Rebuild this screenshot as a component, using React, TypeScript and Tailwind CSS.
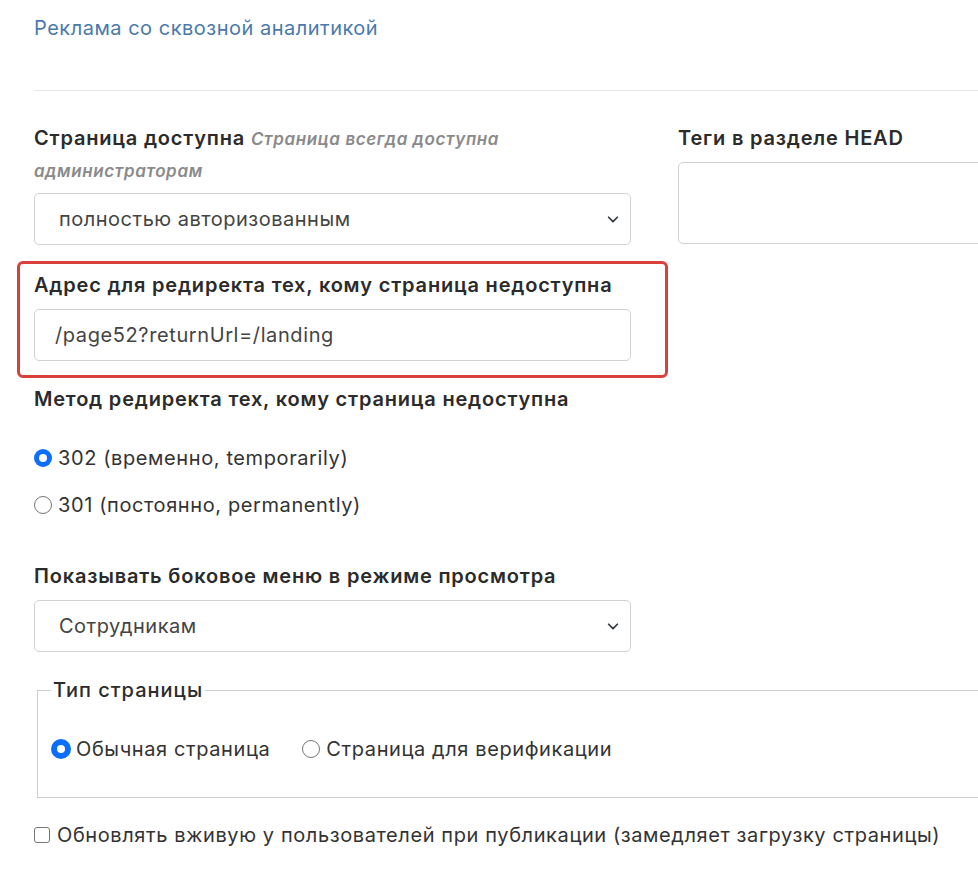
import React from "react";

function Chevron() {
  return (
    <svg width="14" height="14" viewBox="0 0 16 16" fill="none" stroke="#343a40" strokeWidth="2" strokeLinecap="round" strokeLinejoin="round">
      <path d="M3 6l5 5 5-5" />
    </svg>
  );
}

function SelectBox({ value }: { value: string }) {
  return (
    <div className="flex h-[52px] items-center justify-between rounded-[5px] border border-[#d2d2d2] bg-white pl-[24px] pr-[10px] text-[20px] tracking-[0.5px] text-[#444]">
      <span>{value}</span>
      <Chevron />
    </div>
  );
}

function Radio({ checked, big }: { checked?: boolean; big?: boolean }) {
  const size = big ? "h-[20px] w-[20px]" : "h-[18px] w-[18px]";
  if (checked) {
    return (
      <span className={`${size} flex shrink-0 items-center justify-center rounded-full bg-[#0d6efd]`}>
        <span className="h-[8px] w-[8px] rounded-full bg-white" />
      </span>
    );
  }
  return <span className={`${size} shrink-0 rounded-full border border-[#767676] bg-white`} />;
}

const label = "text-[20px] font-semibold leading-[31px] tracking-[0.8px] text-[#2b2b2b]";

export default function App() {
  return (
    <div className="w-[978px] h-[875px] overflow-hidden bg-white font-['Inter',sans-serif]">
      <div className="w-[1300px] pl-[34px] pt-[14px]">
        <a className="block text-[20px] leading-[28px] tracking-[0.5px] text-[#4a7aab]">Реклама со сквозной аналитикой</a>
        <div className="mt-[48px] h-px bg-[#e6e6e6]" />

        <div className="mt-[32px] flex gap-[47px]">
          <div className="w-[597px] shrink-0">
            <div className={label}>
              Страница доступна{" "}
              <em className="text-[17px] font-semibold leading-[31px] tracking-[0.6px] text-[#8a8a8a]">Страница всегда доступна администраторам</em>
            </div>
            <div className="mt-[6px]">
              <SelectBox value="полностью авторизованным" />
            </div>

            <div className="-ml-[17px] -mr-[37px] mt-[16px] rounded-[6px] border-[3px] border-[#d9403a] pb-[14px] pl-[14px] pr-[34px] pt-[6px]">
              <div className={label}>Адрес для редиректа тех, кому страница недоступна</div>
              <div className="mt-[8px] flex h-[52px] items-center rounded-[5px] border border-[#d2d2d2] pl-[20px] text-[20px] tracking-[0.6px] text-[#444]">
                /page52?returnUrl=/landing
              </div>
            </div>

            <div className={`${label} mt-[6px]`}>Метод редиректа тех, кому страница недоступна</div>
            <div className="mt-[28px] flex flex-col gap-[17px] text-[20px] tracking-[0.6px] text-[#333]">
              <label className="flex h-[30px] items-center gap-[6px]">
                <Radio checked />
                302 (временно, temporarily)
              </label>
              <label className="flex h-[30px] items-center gap-[6px]">
                <Radio />
                301 (постоянно, permanently)
              </label>
            </div>

            <div className={`${label} mt-[41px]`}>Показывать боковое меню в режиме просмотра</div>
            <div className="mt-[8px]">
              <SelectBox value="Сотрудникам" />
            </div>
          </div>

          <div className="flex-1">
            <div className={label}>Теги в разделе HEAD</div>
            <div className="mt-[8px] h-[82px] rounded-[5px] border border-[#d2d2d2]" />
          </div>
        </div>

        <fieldset className="ml-[3px] mt-[23px] h-[123px] border border-[#cfcfcf] pl-[13px]">
          <legend className="px-[2px] text-[20px] font-medium leading-[31px] tracking-[1px] text-[#2b2b2b]">Тип страницы</legend>
          <div className="mt-[28px] flex items-center text-[20px] tracking-[0.6px] text-[#333]">
            <label className="flex items-center gap-[5px]">
              <Radio checked big />
              Обычная страница
            </label>
            <label className="ml-[32px] flex items-center gap-[6px]">
              <Radio />
              Страница для верификации
            </label>
          </div>
        </fieldset>

        <label className="mt-[22px] flex items-center gap-[7px] text-[20px] tracking-[0.6px] text-[#333]">
          <span className="h-[16px] w-[16px] rounded-[3px] border border-[#767676] bg-white" />
          Обновлять вживую у пользователей при публикации (замедляет загрузку страницы)
        </label>
      </div>
    </div>
  );
}
